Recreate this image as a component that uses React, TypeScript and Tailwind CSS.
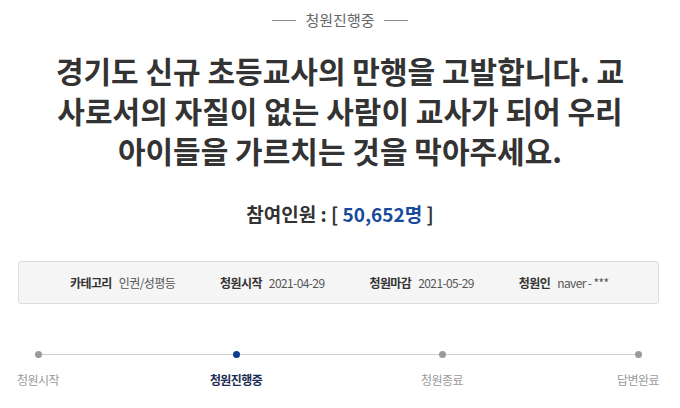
const FONT = "font-['Noto_Sans_CJK_KR','Noto_Sans',sans-serif]"

interface InfoItem {
  label: string
  value: string
}

const INFO: InfoItem[] = [
  { label: '카테고리', value: '인권/성평등' },
  { label: '청원시작', value: '2021-04-29' },
  { label: '청원마감', value: '2021-05-29' },
  { label: '청원인', value: 'naver - ***' },
]

const TITLE_LINES = [
  '경기도 신규 초등교사의 만행을 고발합니다. 교',
  '사로서의 자질이 없는 사람이 교사가 되어 우리',
  '아이들을 가르치는 것을 막아주세요.',
]

function Dot({ active }: { active?: boolean }) {
  return (
    <span
      className={
        active
          ? 'block w-[7px] h-[7px] rounded-full bg-[#0a3d91] shrink-0'
          : 'block w-[7px] h-[7px] rounded-full bg-[#9a9a9a] shrink-0'
      }
    />
  )
}

export default function App() {
  return (
    <div className={`w-[680px] h-[408px] bg-white overflow-hidden flex flex-col items-center ${FONT}`}>
      {/* status label */}
      <div className="mt-[11px] flex items-center gap-[9px]">
        <span className="block w-[24px] h-px bg-[#8a8a8a]" />
        <span className="text-[15px] leading-[18px] text-[#666]">청원진행중</span>
        <span className="block w-[24px] h-px bg-[#8a8a8a]" />
      </div>

      {/* title */}
      <h1 className="mt-[21px] text-center text-[30px] leading-[40px] font-bold text-[#333]">
        {TITLE_LINES.map((line) => (
          <span key={line} className="block whitespace-nowrap">
            {line}
          </span>
        ))}
      </h1>

      {/* participants */}
      <p className="mt-[31px] text-[19px] leading-[26px] font-bold text-[#333]">
        참여인원 : [ <span className="text-[#174a9c]">50,652명</span> ]
      </p>

      {/* info box */}
      <div className="mt-[34px] self-start ml-[18px] w-[641px] h-[43px] bg-[#f5f5f5] border border-[#dcdcdc] rounded-[3px] flex items-center pl-[51px] gap-[45px]">
        {INFO.map((item) => (
          <div key={item.label} className="flex items-center gap-[7px] text-[12px] tracking-[-0.6px]">
            <span className="font-bold text-[#333]">{item.label}</span>
            <span className="text-[#555]">{item.value}</span>
          </div>
        ))}
      </div>

      {/* progress */}
      <div className="mt-[47px] self-start ml-[34.5px] flex items-center">
        <Dot />
        <span className="block w-[191px] h-px bg-[#cfcfcf]" />
        <Dot active />
        <span className="block w-[199px] h-px bg-[#cfcfcf]" />
        <Dot />
        <span className="block w-[189px] h-px bg-[#cfcfcf]" />
        <Dot />
      </div>
      <div className="mt-[14px] self-start flex text-[12px] leading-[16px] tracking-[-0.6px]">
        <span className="ml-[3px] w-[70px] text-center text-[#9a9a9a]">청원시작</span>
        <span className="ml-[128px] w-[70px] text-center font-bold text-[#1c2d55]">청원진행중</span>
        <span className="ml-[136px] w-[70px] text-center text-[#9a9a9a]">청원종료</span>
        <span className="ml-[126px] w-[70px] text-center text-[#9a9a9a]">답변완료</span>
      </div>
    </div>
  )
}
